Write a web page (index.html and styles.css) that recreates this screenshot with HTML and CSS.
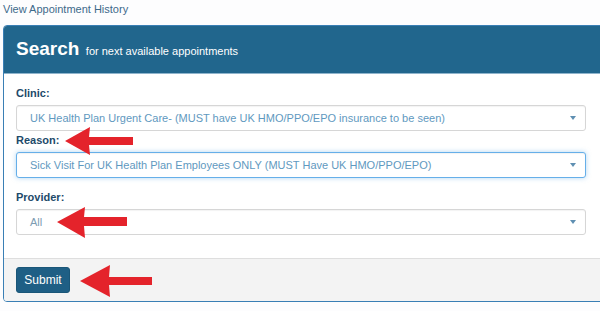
FILE: index.html
```html
<!DOCTYPE html>
<html lang="en">
<head>
  <meta charset="UTF-8">
  <meta name="viewport" content="width=device-width, initial-scale=1">
  <title>Search Appointments</title>
  <link rel="stylesheet" href="styles.css">
</head>
<body>

  <a class="history-link" href="#">View Appointment History</a>

  <div class="panel">
    <div class="panel-heading">
      <span class="panel-title">Search</span>
      <span class="panel-sub">for next available appointments</span>
    </div>

    <div class="panel-body">
      <label class="field-label">Clinic:</label>
      <div class="select-box">
        <span class="select-text">UK Health Plan Urgent Care- (MUST have UK HMO/PPO/EPO insurance to be seen)</span>
        <span class="caret"></span>
      </div>

      <label class="field-label reason-label">Reason:</label>
      <div class="select-box focused">
        <span class="select-text">Sick Visit For UK Health Plan Employees ONLY (MUST Have UK HMO/PPO/EPO)</span>
        <span class="caret"></span>
      </div>

      <label class="field-label provider-label">Provider:</label>
      <div class="select-box">
        <span class="select-text muted">All</span>
        <span class="caret"></span>
      </div>
    </div>

    <div class="panel-footer">
      <button class="btn-submit">Submit</button>
    </div>
  </div>

  <!-- Red annotation arrows drawn over the form -->
  <svg class="arrows" width="600" height="311" viewBox="0 0 600 311">
    <polygon points="65,141 90,127 89,137 133,137 133,145 89,145 90,155"/>
    <polygon points="57,222 85,207 84,217 127,217 127,226 84,226 85,238"/>
    <polygon points="80,281 110,265 109,277 152,277 152,285 109,285 110,297"/>
  </svg>

</body>
</html>
```

FILE: styles.css
```css
* {
  box-sizing: border-box;
}

body {
  margin: 0;
  padding: 2px 0 0 3px;
  font-family: "Liberation Sans", Arial, sans-serif;
  background: #fdfdfe;
  width: 600px;
  height: 311px;
  overflow: hidden;
  position: relative;
}

.history-link {
  display: block;
  font-size: 11px;
  line-height: 14px;
  color: #3d6a8b;
  text-decoration: none;
}

/* Search panel */
.panel {
  margin-top: 9px;
  width: 640px;
  border: 1px solid #3a7fb5;
  border-radius: 4px;
  background: #fff;
}

.panel-heading {
  height: 48px;
  padding: 12px 12px 0;
  background: #21668d;
  border-bottom: 1px solid #8fb4cc;
  border-radius: 3px 3px 0 0;
  color: #fff;
  line-height: 22px;
  white-space: nowrap;
}

.panel-title {
  font-size: 19px;
  font-weight: bold;
}

.panel-sub {
  font-size: 11px;
  margin-left: 2px;
}

.panel-body {
  padding: 12px 12px 23px;
}

.field-label {
  display: block;
  font-size: 11px;
  font-weight: bold;
  line-height: 14px;
  color: #1d4a6a;
  margin-bottom: 5px;
}

.reason-label {
  margin-top: 2px;
}

.provider-label {
  margin-top: 12px;
}

.select-box {
  width: 570px;
  height: 26px;
  display: flex;
  align-items: center;
  justify-content: space-between;
  padding: 0 9px 0 13px;
  border: 1px solid #d6d6d6;
  border-radius: 3px;
  background: #fff;
  box-shadow: inset 0 1px 1px rgba(0, 0, 0, 0.05);
}

.select-box.focused {
  border-color: #66afe9;
  box-shadow: inset 0 1px 1px rgba(0, 0, 0, 0.05), 0 0 5px rgba(102, 175, 233, 0.5);
}

.select-text {
  font-size: 11px;
  color: #5f99c0;
  white-space: nowrap;
}

.select-text.muted {
  color: #7d9cb2;
}

.caret {
  width: 0;
  height: 0;
  border-left: 3px solid transparent;
  border-right: 3px solid transparent;
  border-top: 4px solid #5f8fb2;
}

.panel-footer {
  padding: 8px 12px 8px;
  background: #f3f3f3;
  border-top: 1px solid #dedede;
  border-radius: 0 0 3px 3px;
}

.btn-submit {
  display: block;
  width: 54px;
  height: 26px;
  padding: 0;
  border: 1px solid #1a5678;
  border-radius: 3px;
  background: #1f5f85;
  color: #fff;
  font-family: inherit;
  font-size: 12px;
}

/* Annotation overlay */
.arrows {
  position: absolute;
  top: 0;
  left: 0;
  fill: #e4232b;
}
```
